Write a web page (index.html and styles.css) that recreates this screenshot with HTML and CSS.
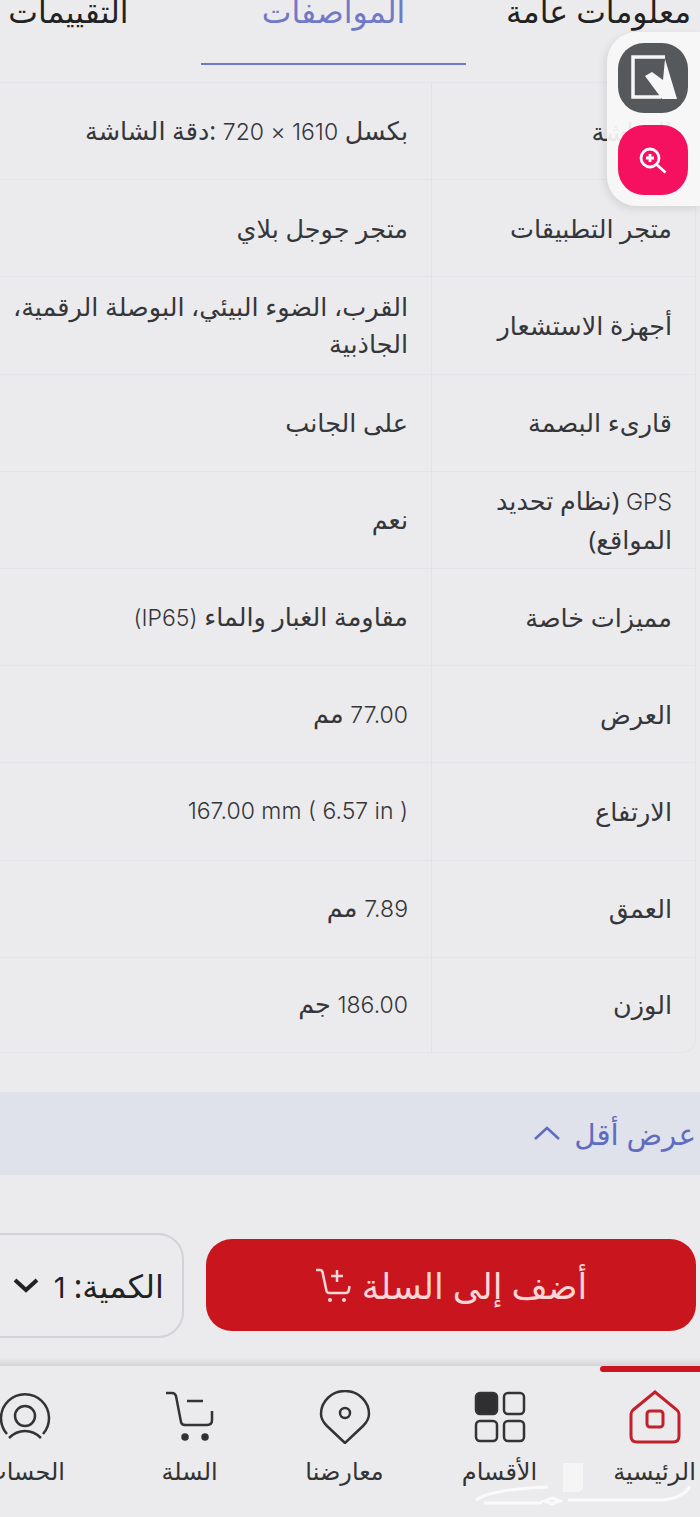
FILE: index.html
```html
<!DOCTYPE html>
<html lang="ar" dir="rtl">
<head>
<meta charset="utf-8">
<title>المواصفات</title>
<link rel="stylesheet" href="styles.css">
</head>
<body>
<div class="page">
  <nav class="tabs">
    <div class="tab">معلومات عامة</div>
    <div class="tab tab-active">المواصفات</div>
    <div class="tab">التقييمات</div>
  </nav>

  <section class="specs">
    <div class="row"><div class="key">الشاشة</div><div class="val"><div>بكسل <span class="lat">1610 × 720</span> :دقة الشاشة</div></div></div>
    <div class="row"><div class="key">متجر التطبيقات</div><div class="val">متجر جوجل بلاي</div></div>
    <div class="row"><div class="key">أجهزة الاستشعار</div><div class="val">القرب، الضوء البيئي، البوصلة الرقمية، الجاذبية</div></div>
    <div class="row"><div class="key">قارىء البصمة</div><div class="val">على الجانب</div></div>
    <div class="row"><div class="key"><div><span class="lat">GPS</span> (نظام تحديد المواقع)</div></div><div class="val">نعم</div></div>
    <div class="row"><div class="key">مميزات خاصة</div><div class="val"><div>مقاومة الغبار والماء <span class="lat">(IP65)</span></div></div></div>
    <div class="row"><div class="key">العرض</div><div class="val"><div><span class="lat">77.00</span> مم</div></div></div>
    <div class="row"><div class="key">الارتفاع</div><div class="val"><bdi class="lat" dir="ltr">167.00 mm ( 6.57 in )</bdi></div></div>
    <div class="row"><div class="key">العمق</div><div class="val"><div><span class="lat">7.89</span> مم</div></div></div>
    <div class="row"><div class="key">الوزن</div><div class="val"><div><span class="lat">186.00</span> جم</div></div></div>
  </section>

  <div class="less">
    <span>عرض أقل</span>
    <svg class="less-icon" viewBox="0 0 28 16" width="28" height="16"><path d="M2 14 L14 3 L26 14"/></svg>
  </div>

  <div class="buy">
    <button class="add">
      <span>أضف إلى السلة</span>
      <svg viewBox="0 0 36 36" width="36" height="36" class="add-icon"><path d="M1 3h4q2 0 2.500 2l4 19q.6 2 3 2h16q3 0 3.400-3l.6-4"/><path d="M22 3v12M16 9h12"/><circle cx="15" cy="33" r="2" class="dot"/><circle cx="29" cy="33" r="2" class="dot"/></svg>
    </button>
    <div class="qty">
      <span>الكمية: <span class="lat">1</span></span>
      <svg viewBox="0 0 26 16" width="26" height="16" class="qty-icon"><path d="M2 3 L13 13 L24 3"/></svg>
    </div>
  </div>

  <footer class="bottom">
    <div class="item item-home">
      <svg viewBox="0 0 54 54" width="54" height="54" class="ico red"><path d="M5 20 L27 2 L49 20 Q51 22 51 24 V46 Q51 52 45 52 H9 Q3 52 3 46 V24 Q3 22 5 20 Z"/><rect x="19" y="21" width="16" height="16" rx="3"/></svg>
      <span>الرئيسية</span>
    </div>
    <div class="item">
      <svg viewBox="0 0 54 54" width="54" height="54" class="ico"><rect x="3" y="3" width="21" height="21" rx="4" class="fill"/><rect x="31" y="3" width="20" height="21" rx="4"/><rect x="3" y="31" width="21" height="20" rx="4"/><rect x="31" y="31" width="20" height="20" rx="4"/></svg>
      <span>الأقسام</span>
    </div>
    <div class="item">
      <svg viewBox="0 0 54 54" width="54" height="54" class="ico"><path d="M27 53 L9 36 Q3 30 3 24 A24 23 0 0 1 51 24 Q51 30 45 36 Z"/><circle cx="27" cy="23" r="5"/></svg>
      <span>معارضنا</span>
    </div>
    <div class="item">
      <svg viewBox="0 0 54 54" width="54" height="54" class="ico"><path d="M3 3h6q3 0 4 3l5 26q.6 3 4 3h22q5 0 5-5v-9"/><path d="M24 11h16"/><circle cx="22" cy="47" r="2.500" class="fill"/><circle cx="42" cy="47" r="2.500" class="fill"/></svg>
      <span>السلة</span>
    </div>
    <div class="item item-account">
      <svg viewBox="0 0 54 54" width="54" height="54" class="ico"><path d="M9 44 A24 24 0 1 1 45 44"/><circle cx="27" cy="26" r="10"/><path d="M11 48 Q18 41 27 41 Q36 41 43 48"/></svg>
      <span>الحساب</span>
    </div>
  </footer>

  <aside class="float">
    <div class="fbtn fbtn-grey">
      <svg viewBox="0 0 70 70" width="70" height="70"><path class="frame" d="M47 14H15V54H43"/><path class="hand" d="M47 16 59 56H44L27 33 34 29 45 37Z"/></svg>
    </div>
    <div class="fbtn fbtn-pink">
      <svg viewBox="0 0 30 30" width="30" height="30"><circle cx="12" cy="13" r="9"/><path d="M8 13h8M12 9v8M18.500 19.500l9 8"/></svg>
    </div>
  </aside>

  <svg class="mark" viewBox="0 0 222 44" width="222" height="44"><path class="mark-page" d="M91 1h20v26l-4 3h-16z"/><path class="mark-line" d="M4 38Q20 27 76 25M12 41H70M80 36l8 3-8 3-8-3zM96 38H190Q212 36 218 24"/></svg>
</div>
</body>
</html>
```

FILE: styles.css
```css
* { box-sizing: border-box; }
html, body { margin: 0; padding: 0; }
body {
  width: 700px;
  height: 1517px;
  overflow: hidden;
  background: #ebebed;
  color: #2e2f32;
  font-family: "Noto Sans", "DejaVu Sans", sans-serif;
}
.page {
  position: relative;
  width: 700px;
  height: 1517px;
  overflow: hidden;
  display: flex;
  flex-direction: column;
  align-items: flex-start;
}
.lat { font-family: Inter, "Noto Sans", sans-serif; font-size: 23px; font-weight: 300; }
.tabs {
  display: grid;
  grid-template-columns: 265px 265px 265px;
  margin-right: -31px;
  height: 65px;
  flex: none;
}
.tab {
  font-size: 31.500px;
  line-height: 30px;
  text-align: center;
  color: #222;
  margin-top: -4px;
  height: 69px;
}
.tab-active {
  color: #6f79c8;
  border-bottom: 2px solid #6f79c8;
}
.specs {
  margin-top: 17px;
  margin-right: 4px;
  width: 720px;
  flex: none;
  border: 1px solid #e4e4e8;
  border-radius: 0 0 14px 14px;
  border-top: 0;
}
.row {
  display: grid;
  grid-template-columns: 264px 1fr;
  height: 97.200px;
  border-top: 1px solid #e4e4e8;
}
.row:last-child { height: 95px; }
.key, .val {
  display: flex;
  align-items: center;
  font-size: 25.500px;
  line-height: 37px;
  color: #35363a;
}
.key { padding: 0 23px 0 16px; border-left: 1px solid #e2e2e6; }
.val { padding: 0 23px 0 0; }
.less {
  margin-top: 39px;
  width: 700px;
  height: 83px;
  flex: none;
  background: #dfe2ea;
  color: #5f6cc0;
  font-size: 29.500px;
  display: flex;
  align-items: center;
  gap: 13px;
  padding-right: 4px;
}
.less-icon path { fill: none; stroke: #5f6cc0; stroke-width: 2.500; }
.buy {
  margin-top: 58px;
  width: 740px;
  flex: none;
  display: flex;
  align-items: center;
  gap: 22px;
  padding-right: 4px;
  height: 105px;
}
.add {
  width: 490px;
  height: 92px;
  border: 0;
  border-radius: 26px;
  background: #c9151e;
  color: #fbd6d6;
  font: inherit;
  font-size: 35px;
  display: flex;
  align-items: center;
  justify-content: center;
  gap: 11px;
  padding: 0;
}
.add-icon path { fill: none; stroke: #fbd6d6; stroke-width: 2.500; }
.dot { fill: #fbd6d6; }
.qty {
  width: 224px;
  height: 105px;
  border: 2px solid #d2d3d7;
  border-radius: 26px;
  font-size: 32px;
  color: #222;
  display: flex;
  align-items: center;
  gap: 15px;
  padding-right: 18px;
}
.qty .lat { font-size: 29px; font-weight: 400; }
.qty-icon path { fill: none; stroke: #222; stroke-width: 4; }
.bottom {
  margin-top: 28px;
  margin-right: -32px;
  width: 775px;
  height: 152px;
  flex: none;
  display: grid;
  grid-template-columns: repeat(5, 155px);
  box-shadow: 0 -4px 6px rgba(0,0,0,.1);
  background: #ebebed;
}
.item {
  display: flex;
  flex-direction: column;
  align-items: center;
  padding-top: 24px;
  gap: 10px;
  font-size: 24px;
  color: #333;
  position: relative;
}
.item-account { padding-right: 20px; }
.item-home::before {
  content: "";
  position: absolute;
  top: 0;
  right: 32px;
  width: 100px;
  height: 6px;
  background: #c9151e;
  border-radius: 3px 0 0 3px;
}
.ico * { fill: none; stroke: #333; stroke-width: 2.500; }
.ico .fill { fill: #2f2f31; }
.ico.red * { stroke: #c2202b; stroke-width: 3; }
.float {
  position: absolute;
  top: 32px;
  right: 0;
  width: 93px;
  height: 174px;
  background: rgba(248,248,249,.93);
  border-radius: 30px 0 0 30px;
  box-shadow: -2px 3px 8px rgba(0,0,0,.1);
  display: flex;
  flex-direction: column;
  gap: 12px;
  padding: 11px 12px 0 0;
}
.fbtn {
  width: 70px;
  height: 70px;
  border-radius: 26px;
  display: flex;
  align-items: center;
  justify-content: center;
}
.fbtn-grey { background: #56595c; }
.fbtn-pink { background: #f5115f; }
.frame { fill: none; stroke: #f7f7f7; stroke-width: 3.500; }
.hand { fill: #f7f7f7; }
.fbtn-pink svg * { fill: none; stroke: #fff; stroke-width: 2.800; }
.mark {
  position: absolute;
  left: 472px;
  top: 1462px;
  pointer-events: none;
}
.mark-page { fill: rgba(250,250,250,.7); }
.mark-line { fill: none; stroke: rgba(255,255,255,.75); stroke-width: 3; }
```
